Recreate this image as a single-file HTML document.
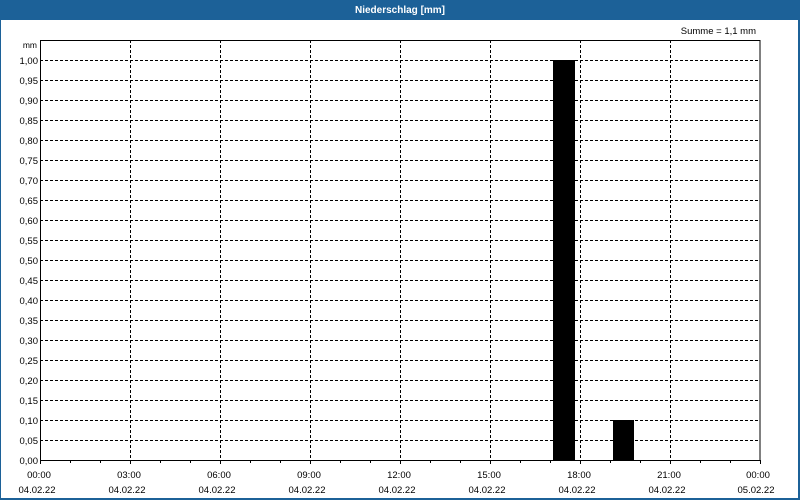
<!DOCTYPE html>
<html><head><meta charset="utf-8"><style>
html,body{margin:0;padding:0;}
body{width:800px;height:500px;overflow:hidden;background:#fff;font-family:"Liberation Sans",sans-serif;}
</style></head><body>
<svg width="800" height="500" xmlns="http://www.w3.org/2000/svg" style="display:block" font-family="Liberation Sans, sans-serif" font-size="9.5">
<rect x="0" y="0" width="800" height="500" fill="#fff"/>
<rect x="0" y="0" width="800" height="20" fill="#1c6198"/>
<rect x="0" y="0" width="1" height="500" fill="#1c6198"/>
<rect x="798" y="0" width="2" height="500" fill="#1c6198"/>
<rect x="0" y="498" width="800" height="2" fill="#1c6198"/>
<text x="400" y="13" text-anchor="middle" fill="#fff" font-weight="bold" font-size="10">Niederschlag [mm]</text>
<text x="756" y="34" text-anchor="end" fill="#000">Summe = 1,1 mm</text>
<text x="37" y="48" text-anchor="end" fill="#000" font-size="8.5">mm</text>
<g stroke="#000" stroke-width="1" stroke-dasharray="3,2" fill="none">
<path d="M40 60.5H760M40 80.5H760M40 100.5H760M40 120.5H760M40 140.5H760M40 160.5H760M40 180.5H760M40 200.5H760M40 220.5H760M40 240.5H760M40 260.5H760M40 280.5H760M40 300.5H760M40 320.5H760M40 340.5H760M40 360.5H760M40 380.5H760M40 400.5H760M40 420.5H760M40 440.5H760"/>
<path d="M130.5 40V460M220.5 40V460M310.5 40V460M400.5 40V460M490.5 40V460M580.5 40V460M670.5 40V460"/>
</g>
<rect x="553" y="60" width="22" height="400" fill="#000"/>
<rect x="613" y="420" width="21" height="40" fill="#000"/>
<g stroke="#000" stroke-width="1" fill="none">
<rect x="40.5" y="40.5" width="719.5" height="420"/>
<path d="M40.5 460v4M70.5 460v3M100.5 460v3M130.5 460v4M160.5 460v3M190.5 460v3M220.5 460v4M250.5 460v3M280.5 460v3M310.5 460v4M340.5 460v3M370.5 460v3M400.5 460v4M430.5 460v3M460.5 460v3M490.5 460v4M520.5 460v3M550.5 460v3M580.5 460v4M610.5 460v3M640.5 460v3M670.5 460v4M700.5 460v3M730.5 460v3M760.5 460v4"/>
</g>
<g text-anchor="end" fill="#000">
<text x="38" y="64">1,00</text><text x="38" y="84">0,95</text><text x="38" y="104">0,90</text><text x="38" y="124">0,85</text><text x="38" y="144">0,80</text><text x="38" y="164">0,75</text><text x="38" y="184">0,70</text><text x="38" y="204">0,65</text><text x="38" y="224">0,60</text><text x="38" y="244">0,55</text><text x="38" y="264">0,50</text><text x="38" y="284">0,45</text><text x="38" y="304">0,40</text><text x="38" y="324">0,35</text><text x="38" y="344">0,30</text><text x="38" y="364">0,25</text><text x="38" y="384">0,20</text><text x="38" y="404">0,15</text><text x="38" y="424">0,10</text><text x="38" y="444">0,05</text><text x="38" y="464">0,00</text>
</g>
<g text-anchor="middle" fill="#000">
<text x="39" y="478">00:00</text><text x="129" y="478">03:00</text><text x="219" y="478">06:00</text><text x="309" y="478">09:00</text><text x="399" y="478">12:00</text><text x="489" y="478">15:00</text><text x="579" y="478">18:00</text><text x="669" y="478">21:00</text><text x="758" y="478">00:00</text>
<text x="37" y="493">04.02.22</text><text x="127" y="493">04.02.22</text><text x="217" y="493">04.02.22</text><text x="307" y="493">04.02.22</text><text x="397" y="493">04.02.22</text><text x="487" y="493">04.02.22</text><text x="577" y="493">04.02.22</text><text x="667" y="493">04.02.22</text><text x="756" y="493">05.02.22</text>
</g>
</svg>
</body></html>
